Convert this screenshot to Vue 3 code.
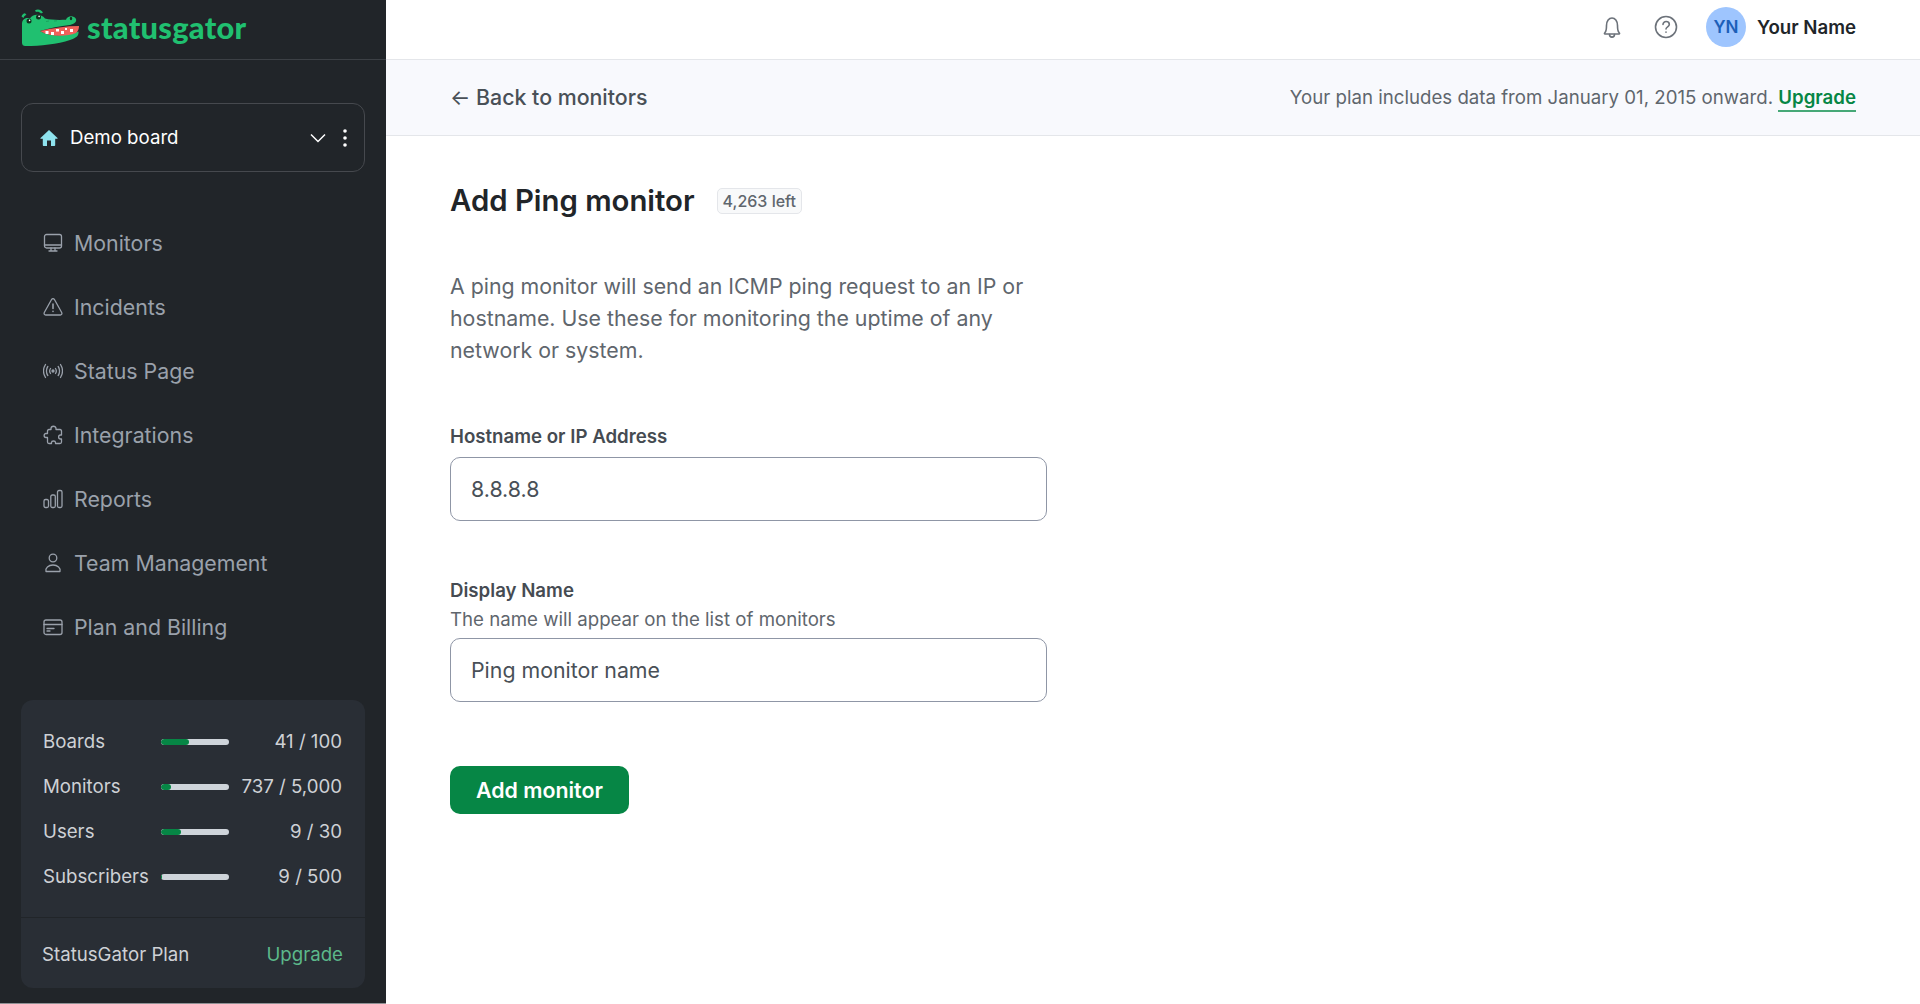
<script setup>
const nav = [
  { label: 'Monitors', icon: 'monitor' },
  { label: 'Incidents', icon: 'alert' },
  { label: 'Status Page', icon: 'broadcast' },
  { label: 'Integrations', icon: 'puzzle' },
  { label: 'Reports', icon: 'bars' },
  { label: 'Team Management', icon: 'person' },
  { label: 'Plan and Billing', icon: 'card' }
]
const usage = [
  { label: 'Boards', pct: 41, value: '41 / 100' },
  { label: 'Monitors', pct: 15, value: '737 / 5,000' },
  { label: 'Users', pct: 30, value: '9 / 30' },
  { label: 'Subscribers', pct: 2, value: '9 / 500' }
]
</script>

<template>
  <div class="page">
    <aside class="sidebar">
      <div class="brand">
        <svg class="gator" width="60" height="40" viewBox="20 8 60 40">
          <path d="M21.500 16.500 C22 14.500 23.500 13.500 25 13.200 L26.500 15 C25 15.300 24 16.300 23.500 18 Z M35 10.500 C37.500 8.800 41 9.500 43 12.500 L41 13.500 C39.500 11.800 37.500 11.300 36 12 Z" fill="#20c070" />
          <path d="M22 24 C22 20 25 17 30 18.500 C32 14 41 13 45 18.500 C50 20 58 20 66 19.800 C67 15.500 74 14.800 76 19 C77 22 74 24 70 25 C60 26 50 28 40 31 C50 37 66 36 78.500 31.500 C79 36 76 38 70 40 C58 44 40 46 26 46 C23 46 22 45 22 42 Z" fill="#20c070" />
          <path d="M40 31 C52 28 66 26 79 26 C79 29 78 31 76 33 C66 37 50 37 40 31 Z" fill="#f0605a" />
          <path d="M45.500 31h3v3h-3z M51 32h3v3h-3z M56 29h3v2.500h-3z M61 31h3v3h-3z M70 29h3v3h-3z M65 28h2v2h-2z" fill="#fff" />
          <circle cx="29" cy="21" r="2.500" fill="#12301f" />
          <circle cx="38.500" cy="17" r="2.500" fill="#12301f" />
          <circle cx="29.600" cy="20.400" r="0.800" fill="#fff" />
          <circle cx="39.100" cy="16.400" r="0.800" fill="#fff" />
          <ellipse cx="71" cy="18.500" rx="1.200" ry="1.700" fill="#12301f" />
          <path d="M46 21.500 L49 21 M54 21 L57 20.800" stroke="#18a45e" stroke-width="1" fill="none" />
        </svg>
        <span class="wordmark">statusgator</span>
      </div>

      <div class="board">
        <svg width="18" height="18" viewBox="0 0 18 18" class="home"><path d="M9 1 L17.500 9 C17.800 9.400 17.600 9.800 17 9.800 H15.200 V16 C15.200 16.600 14.800 17 14.200 17 H11 V11.500 H7 V17 H3.800 C3.200 17 2.800 16.600 2.800 16 V9.800 H1 C0.400 9.800 0.200 9.400 0.500 9 Z" fill="#8fe3ee" /></svg>
        <span class="board-name">Demo board</span>
        <svg width="18" height="18" viewBox="0 0 18 18" class="chev"><path d="M2 5.500 L9 12.500 L16 5.500" fill="none" stroke="#fff" stroke-width="1.500" /></svg>
        <svg width="6" height="18" viewBox="0 0 6 18" class="dots"><circle cx="3" cy="2" r="1.800" fill="#fff" /><circle cx="3" cy="9" r="1.800" fill="#fff" /><circle cx="3" cy="16" r="1.800" fill="#fff" /></svg>
      </div>

      <nav class="nav">
        <a v-for="item in nav" :key="item.label" class="nav-item">
          <svg width="20" height="20" viewBox="0 0 20 20" class="nav-icon" fill="none" stroke="#9aa1ab" stroke-width="1.300" stroke-linecap="round" stroke-linejoin="round">
            <g v-if="item.icon === 'monitor'">
              <rect x="1.500" y="1.500" width="17" height="13.500" rx="2" />
              <path d="M1.500 12 H18.500 M6 18 H14 M8 15 V18 M12 15 V18" />
            </g>
            <g v-else-if="item.icon === 'alert'">
              <path d="M8.700 2.300 C9.300 1.300 10.700 1.300 11.300 2.300 L18.700 15.500 C19.300 16.700 18.600 18 17.300 18 H2.700 C1.400 18 0.700 16.700 1.300 15.500 Z" />
              <path d="M10 7 V11.500 M10 14.300 V14.500" stroke-width="1.600" />
            </g>
            <g v-else-if="item.icon === 'broadcast'">
              <circle cx="10" cy="10" r="1" fill="#9aa1ab" />
              <path d="M7.500 7.500 C6.500 9 6.500 11 7.500 12.500 M12.500 7.500 C13.500 9 13.500 11 12.500 12.500 M4.800 5.500 C3 8 3 12 4.800 14.500 M15.200 5.500 C17 8 17 12 15.200 14.500 M2.500 3.500 C0 7.500 0 12.500 2.500 16.500 M17.500 3.500 C20 7.500 20 12.500 17.500 16.500" />
            </g>
            <g v-else-if="item.icon === 'puzzle'">
              <path d="M8 4.500 H6 C5 4.500 4.500 5 4.500 6 V8.500 H3 C0.500 8.500 0.500 12.500 3 12.500 H4.500 V17 C4.500 18 5 18.500 6 18.500 H8.500 V17.500 C8.500 15.500 12.500 15.500 12.500 17.500 V18.500 H17 C18 18.500 18.500 18 18.500 17 V14 H17.500 C15 14 15 10 17.500 10 H18.500 V6 C18.500 5 18 4.500 17 4.500 H13 V3.500 C13 0.500 8 0.500 8 3.500 Z" />
            </g>
            <g v-else-if="item.icon === 'bars'">
              <rect x="1" y="10.500" width="4.500" height="8" rx="1.500" />
              <rect x="7.800" y="6" width="4.500" height="12.500" rx="1.500" />
              <rect x="14.500" y="1.500" width="4.500" height="17" rx="1.500" />
            </g>
            <g v-else-if="item.icon === 'person'">
              <circle cx="10" cy="5" r="3.800" />
              <path d="M3 18.500 C2 15 5.500 12 10 12 C14.500 12 18 15 17 18.500 Z" />
            </g>
            <g v-else>
              <rect x="1" y="3" width="18" height="14.500" rx="2" />
              <path d="M1 7.500 H19 M4 11.500 H11 M4 14 H7" />
            </g>
          </svg>
          <span>{{ item.label }}</span>
        </a>
      </nav>

      <div class="usage">
        <div class="usage-rows">
          <div v-for="row in usage" :key="row.label" class="usage-row">
            <span class="usage-label">{{ row.label }}</span>
            <span class="track"><span class="fill" :style="{ width: row.pct + '%' }"></span></span>
            <span class="usage-value">{{ row.value }}</span>
          </div>
        </div>
        <div class="plan">
          <span>StatusGator Plan</span>
          <a class="plan-up">Upgrade</a>
        </div>
      </div>
    </aside>

    <div class="main">
      <header class="topbar">
        <svg class="top-icon" width="24" height="24" viewBox="0 0 24 24" fill="none" stroke="#6c727a" stroke-width="1.600" stroke-linecap="round" stroke-linejoin="round">
          <path d="M5 17.500 C6.500 16 6.500 14 6.500 10.500 C6.500 6 9 3 12 3 C15 3 17.500 6 17.500 10.500 C17.500 14 17.500 16 19 17.500 C20 18.500 19.500 19 19 19 H5 C4.500 19 4 18.500 5 17.500 Z" />
          <path d="M9.500 19.500 C9.500 23 14.500 23 14.500 19.500" />
        </svg>
        <svg class="top-icon help" width="24" height="24" viewBox="0 0 24 24" fill="none" stroke="#6c727a" stroke-width="1.600" stroke-linecap="round" stroke-linejoin="round">
          <circle cx="12" cy="12" r="10.500" />
          <path d="M9 9.500 C9 5.500 15.300 5.700 15.300 9.500 C15.300 11.800 12 11.800 12 14" />
          <path d="M12 17 V17.200" />
        </svg>
        <span class="avatar">YN</span>
        <span class="user-name">Your Name</span>
      </header>

      <div class="subbar">
        <a class="back"><span class="arrow">←</span> Back to monitors</a>
        <p class="plan-note">Your plan includes data from January 01, 2015 onward. <a class="note-up">Upgrade</a></p>
      </div>

      <main class="content">
        <div class="title-row">
          <h1>Add Ping monitor</h1>
          <span class="badge">4,263 left</span>
        </div>
        <p class="intro">A ping monitor will send an ICMP ping request to an IP or hostname. Use these for monitoring the uptime of any network or system.</p>

        <label class="label first">Hostname or IP Address</label>
        <input class="field" value="8.8.8.8" />

        <label class="label second">Display Name</label>
        <div class="hint">The name will appear on the list of monitors</div>
        <input class="field" value="Ping monitor name" />

        <button class="submit">Add monitor</button>
      </main>
    </div>
  </div>
</template>

<style>
html, body { margin: 0; background: #fff; }
</style>

<style scoped>
.page {
  display: flex;
  height: 1004px;
  overflow: hidden;
  font-family: Inter, "Liberation Sans", sans-serif;
}
.sidebar {
  width: 386px;
  flex: none;
  background: #212529;
  box-sizing: border-box;
  border-bottom: 1px solid #8f9194;
  display: flex;
  flex-direction: column;
  height: 1004px;
}
.brand {
  height: 59px;
  border-bottom: 1px solid #3c4045;
  display: flex;
  align-items: flex-start;
  padding-left: 20px;
  gap: 7px;
  box-sizing: content-box;
}
.gator { flex: none; margin-top: 8px; }
.wordmark {
  font-family: Lato, sans-serif;
  font-weight: 900;
  font-size: 30.800px;
  line-height: 55px;
  color: #20c070;
  letter-spacing: 0.3px;
}
.board {
  margin: 43px 21px 0 21px;
  height: 69px;
  box-sizing: border-box;
  border: 1px solid #46494e;
  border-radius: 12px;
  display: flex;
  align-items: center;
  padding: 0 16px 0 18px;
}
.home { flex: none; }
.board-name { color: #fff; font-size: 18.667px; font-weight: 400; margin-left: 12px; flex: 1; }
.chev { margin-right: 15px; }
.nav { margin-top: 39px; display: flex; flex-direction: column; }
.nav-item {
  height: 64px;
  display: flex;
  align-items: center;
  padding-left: 43px;
  gap: 11px;
  color: #9aa1ab;
  font-size: 21.333px;
  line-height: 64px;
}
.nav-icon { flex: none; }
.usage {
  margin: auto 21px 15px 21px;
  height: 288px;
  background: #292e35;
  border-radius: 12px;
  display: flex;
  flex-direction: column;
}
.usage-rows {
  height: 218px;
  box-sizing: border-box;
  padding-top: 19px;
  border-bottom: 1px solid #212529;
}
.usage-row {
  height: 45px;
  display: flex;
  align-items: center;
  padding: 0 23px 0 22px;
  color: #ced1d5;
  font-size: 18.667px;
}
.usage-label { width: 118px; flex: none; }
.track {
  width: 68px;
  height: 6px;
  background: #ced4da;
  border-radius: 3px;
  overflow: hidden;
  flex: none;
}
.fill { display: block; height: 100%; background: #068645; border-radius: 3px; }
.usage-value { margin-left: auto; white-space: nowrap; }
.plan {
  flex: 1;
  display: flex;
  align-items: center;
  justify-content: space-between;
  padding: 2px 22px 0 21px;
  color: #ced1d5;
  font-size: 18.667px;
}
.plan-up { color: #5cb88a; }
.main { flex: 1; min-width: 0; background: #fff; }
.topbar {
  height: 59px;
  border-bottom: 1px solid #e4e6ea;
  box-sizing: content-box;
  display: flex;
  align-items: flex-start;
  justify-content: flex-end;
  padding-right: 64px;
}
.top-icon { margin-top: 15px; }
.help { margin-left: 30px; }
.avatar {
  width: 40px;
  height: 40px;
  border-radius: 50%;
  background: #9ec5fe;
  color: #1c5fb8;
  font-size: 17px;
  font-weight: 600;
  display: flex;
  align-items: center;
  justify-content: center;
  margin-left: 28px;
  margin-top: 7px;
}
.user-name { margin-left: 11px; font-size: 18.667px; font-weight: 600; color: #212529; line-height: 55px; }
.subbar {
  height: 76px;
  box-sizing: border-box;
  background: #f8f9fd;
  border-bottom: 1px solid #e4e6ea;
  display: flex;
  align-items: center;
  justify-content: space-between;
  padding: 0 64px;
}
.back { color: #495057; font-size: 21.333px; font-weight: 500; line-height: 26px; margin-top: -2px; }
.arrow { font-weight: 400; }
.plan-note { margin: 0; color: #5f666d; font-size: 18.667px; }
.note-up {
  color: #068645;
  font-weight: 600;
  border-bottom: 2px solid #46a877;
  padding-bottom: 1px;
}
.content { padding: 0 64px; }
.title-row { display: flex; align-items: center; padding-top: 47px; }
h1 { margin: 0; font-size: 29.333px; line-height: 36px; font-weight: 600; color: #212529; }
.badge {
  margin-left: 22px;
  height: 26px;
  box-sizing: border-box;
  padding: 0 5px;
  display: flex;
  align-items: center;
  background: #f8f9fa;
  border: 1px solid #e4e6ea;
  border-radius: 5px;
  color: #5f666d;
  font-size: 16px;
  font-weight: 500;
}
.intro {
  margin: 51px 0 0;
  width: 597px;
  color: #5f666d;
  font-size: 21.333px;
  line-height: 32px;
}
.label { display: block; font-size: 18.667px; font-weight: 600; color: #454b52; line-height: 24px; }
.first { margin-top: 59px; margin-bottom: 8px; }
.second { margin-top: 58px; }
.hint { color: #5f666d; font-size: 18.667px; line-height: 24px; margin-top: 5px; margin-bottom: 6px; }
.field {
  display: block;
  width: 597px;
  height: 64px;
  box-sizing: border-box;
  border: 1.333px solid #8f96a6;
  border-radius: 10px;
  padding: 0 20px;
  font: 400 21.333px Inter, sans-serif;
  color: #495057;
  background: #fff;
  outline: none;
}
.submit {
  display: block;
  margin-top: 64px;
  width: 179px;
  height: 48px;
  background: #068645;
  border: 0;
  border-radius: 10px;
  color: #fff;
  font: 600 21.333px Inter, sans-serif;
  padding: 0;
}
</style>
